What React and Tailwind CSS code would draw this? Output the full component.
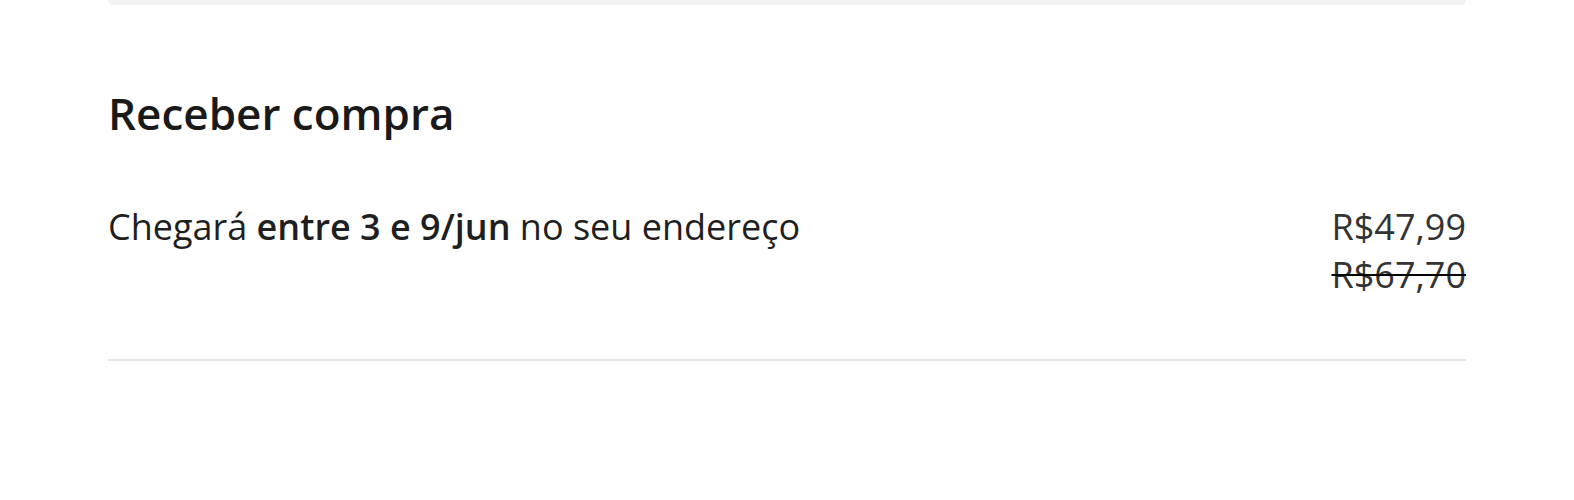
export default function App() {
  return (
    <div className="w-[1574px] h-[500px] bg-white overflow-hidden" style={{ fontFamily: "'Open Sans', 'Liberation Sans', sans-serif" }}>
      <div className="mx-[108px]">
        <div className="h-[5px] bg-[#f2f2f2] rounded-b-[12px]" />
        <div className="pt-[82px]">
          <h2 className="text-[44px] leading-[52px] font-semibold text-[#1a1a1a]">Receber compra</h2>
        </div>
        <div className="flex justify-between items-start pt-[64px] pb-[60px] border-b-2 border-[#e6e6e6]">
          <p className="text-[36px] leading-[48px] text-[#1f1f1f]">
            Chegará <span className="font-semibold">entre 3 e 9/jun</span> no seu endereço
          </p>
          <div className="flex flex-col items-end text-[36px] leading-[48px] text-[#333]">
            <span>R$47,99</span>
            <span className="line-through decoration-2 decoration-black">R$67,70</span>
          </div>
        </div>
      </div>
    </div>
  );
}
